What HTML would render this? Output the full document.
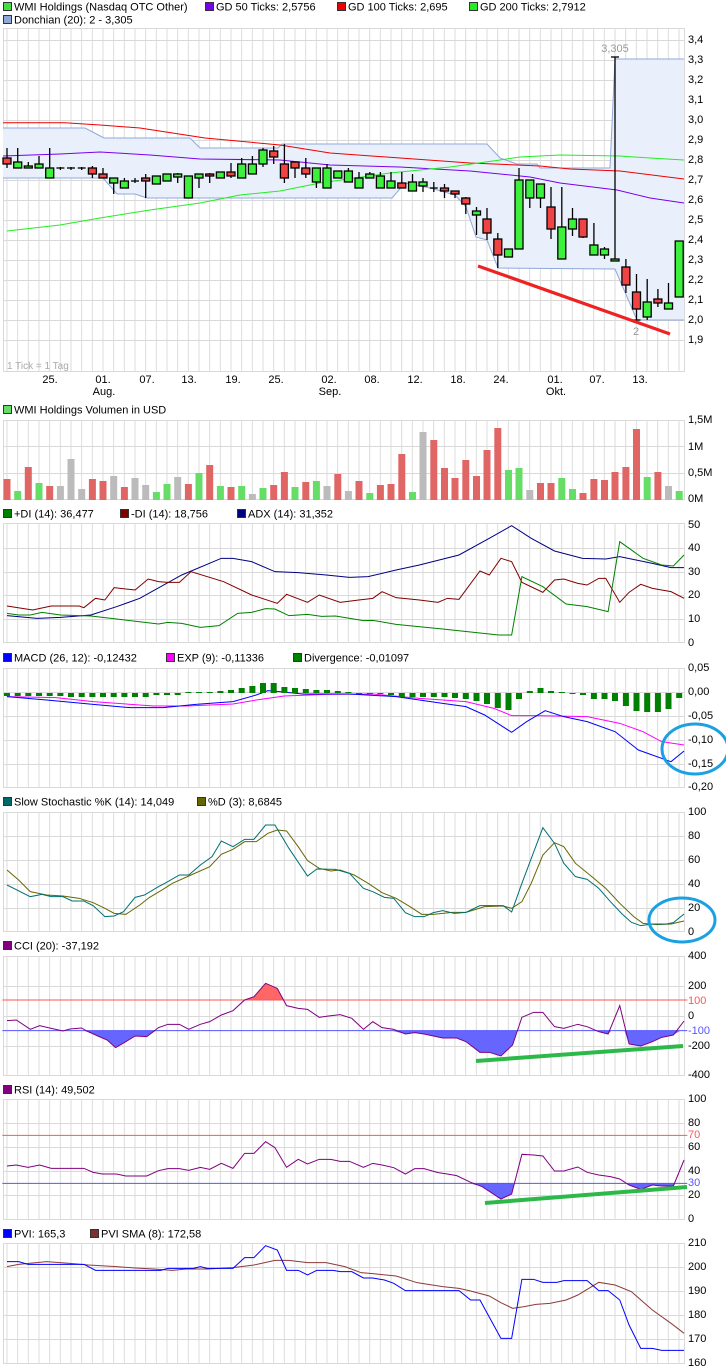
<!DOCTYPE html>
<html><head><meta charset="utf-8"><style>
html,body{margin:0;padding:0;background:#fff;}
svg{display:block;}
text{font-family:"Liberation Sans",sans-serif;font-size:11px;fill:#000;}
.ax{dominant-baseline:central;}
.gl{stroke:#d9d9d9;stroke-width:1;fill:none;}
.ln{fill:none;stroke-width:1;vector-effect:non-scaling-stroke;}
</style></head><body>
<svg width="726" height="1372" viewBox="0 0 726 1372" xmlns="http://www.w3.org/2000/svg">
<defs>
<pattern id="vg" patternUnits="userSpaceOnUse" x="6.5" y="0" width="10.667" height="2000">
<rect x="0" y="0" width="1" height="2000" fill="#dcdcdc"/>
</pattern>
</defs>

<!-- ===== Legends ===== -->
<g>
<rect x="3.5" y="2.5" width="8" height="8" fill="#44dd44" stroke="#333"/><text x="14" y="10.5">WMI Holdings (Nasdaq OTC Other)</text>
<rect x="205.5" y="2.5" width="8" height="8" fill="#7700ee" stroke="#333"/><text x="216" y="10.5">GD 50 Ticks: 2,5756</text>
<rect x="337.5" y="2.5" width="8" height="8" fill="#ee0000" stroke="#333"/><text x="348" y="10.5">GD 100 Ticks: 2,695</text>
<rect x="469.5" y="2.5" width="8" height="8" fill="#22ee22" stroke="#333"/><text x="480" y="10.5">GD 200 Ticks: 2,7912</text>
<rect x="3.5" y="15.5" width="8" height="8" fill="#8fa8d8" stroke="#333"/><text x="14" y="23.5">Donchian (20): 2 - 3,305</text>

<rect x="3.5" y="405.5" width="8" height="8" fill="#66dd66" stroke="#333"/><text x="14" y="413.5">WMI Holdings Volumen in USD</text>

<rect x="3.5" y="509.5" width="8" height="8" fill="#008000" stroke="#333"/><text x="14" y="517.5">+DI (14): 36,477</text>
<rect x="120.5" y="509.5" width="8" height="8" fill="#800000" stroke="#333"/><text x="131" y="517.5">-DI (14): 18,756</text>
<rect x="237.5" y="509.5" width="8" height="8" fill="#000080" stroke="#333"/><text x="248" y="517.5">ADX (14): 31,352</text>

<rect x="3.5" y="653.5" width="8" height="8" fill="#0000ff" stroke="#333"/><text x="14" y="661.5">MACD (26, 12): -0,12432</text>
<rect x="166.5" y="653.5" width="8" height="8" fill="#ff00ff" stroke="#333"/><text x="177" y="661.5">EXP (9): -0,11336</text>
<rect x="293.5" y="653.5" width="8" height="8" fill="#008000" stroke="#333"/><text x="304" y="661.5">Divergence: -0,01097</text>

<rect x="3.5" y="797.5" width="8" height="8" fill="#006666" stroke="#333"/><text x="14" y="805.5">Slow Stochastic %K (14): 14,049</text>
<rect x="197.5" y="797.5" width="8" height="8" fill="#666600" stroke="#333"/><text x="208" y="805.5">%D (3): 8,6845</text>

<rect x="3.5" y="941.5" width="8" height="8" fill="#800080" stroke="#333"/><text x="14" y="949.5">CCI (20): -37,192</text>

<rect x="3.5" y="1085.5" width="8" height="8" fill="#800080" stroke="#333"/><text x="14" y="1093.5">RSI (14): 49,502</text>

<rect x="3.5" y="1229.5" width="8" height="8" fill="#0000ff" stroke="#333"/><text x="14" y="1237.5">PVI: 165,3</text>
<rect x="90.5" y="1229.5" width="8" height="8" fill="#803030" stroke="#333"/><text x="101" y="1237.5">PVI SMA (8): 172,58</text>
</g>

<!-- ===== Vertical grid ===== -->
<rect x="3" y="28" width="681" height="344" fill="url(#vg)"/>
<rect x="3" y="420" width="681" height="80" fill="url(#vg)"/>
<rect x="3" y="523" width="681" height="120" fill="url(#vg)"/>
<rect x="3" y="668" width="681" height="119" fill="url(#vg)"/>
<rect x="3" y="812" width="681" height="120" fill="url(#vg)"/>
<rect x="3" y="956" width="681" height="119" fill="url(#vg)"/>
<rect x="3" y="1099" width="681" height="120" fill="url(#vg)"/>
<rect x="3" y="1243" width="681" height="120" fill="url(#vg)"/>

<!-- ===== Horizontal grid + borders ===== -->
<g class="gl">
<path d="M3 28.5H684 M3 40.5H684 M3 60.5H684 M3 80.5H684 M3 100.5H684 M3 120.5H684 M3 140.5H684 M3 160.5H684 M3 180.5H684 M3 200.5H684 M3 220.5H684 M3 240.5H684 M3 260.5H684 M3 280.5H684 M3 300.5H684 M3 320.5H684 M3 340.5H684 M3 371.5H684 M3.5 28V372 M684.5 28V372"/>
<path d="M3 420.5H684 M3 446.5H684 M3 473.5H684 M3 499.5H684 M3.5 420V500 M684.5 420V500"/>
<path d="M3 523.5H684 M3 548.5H684 M3 572.5H684 M3 595.5H684 M3 619.5H684 M3 642.5H684 M3.5 523V643 M684.5 523V643"/>
<path d="M3 668.5H684 M3 692.5H684 M3 716.5H684 M3 740.5H684 M3 764.5H684 M3 787.5H684 M3.5 668V788 M684.5 668V788"/>
<path d="M3 812.5H684 M3 836.5H684 M3 860.5H684 M3 884.5H684 M3 908.5H684 M3 931.5H684 M3.5 812V932 M684.5 812V932"/>
<path d="M3 956.5H684 M3 986.5H684 M3 1016.5H684 M3 1046.5H684 M3 1075.5H684 M3.5 956V1076 M684.5 956V1076"/>
<path d="M3 1099.5H684 M3 1123.5H684 M3 1147.5H684 M3 1171.5H684 M3 1195.5H684 M3 1219.5H684 M3.5 1099V1220 M684.5 1099V1220"/>
<path d="M3 1243.5H684 M3 1267.5H684 M3 1291.5H684 M3 1315.5H684 M3 1339.5H684 M3 1363.5H684 M3.5 1243V1364 M684.5 1243V1364"/>
</g>

<!-- ===== Axis labels ===== -->
<g class="ax">
<text x="688" y="40" class="ax">3,4</text><text x="688" y="60" class="ax">3,3</text><text x="688" y="80" class="ax">3,2</text><text x="688" y="100" class="ax">3,1</text><text x="688" y="120" class="ax">3,0</text><text x="688" y="140" class="ax">2,9</text><text x="688" y="160" class="ax">2,8</text><text x="688" y="180" class="ax">2,7</text><text x="688" y="200" class="ax">2,6</text><text x="688" y="220" class="ax">2,5</text><text x="688" y="240" class="ax">2,4</text><text x="688" y="260" class="ax">2,3</text><text x="688" y="280" class="ax">2,2</text><text x="688" y="300" class="ax">2,1</text><text x="688" y="320" class="ax">2,0</text><text x="688" y="340" class="ax">1,9</text>
<text x="688" y="420" class="ax">1,5M</text><text x="688" y="447" class="ax">1M</text><text x="688" y="473" class="ax">0,5M</text><text x="688" y="499" class="ax">0M</text>
<text x="688" y="525" class="ax">50</text><text x="688" y="548" class="ax">40</text><text x="688" y="572" class="ax">30</text><text x="688" y="595" class="ax">20</text><text x="688" y="619" class="ax">10</text><text x="688" y="643" class="ax">0</text>
<text x="688" y="668" class="ax">0,05</text><text x="688" y="692" class="ax">0,00</text><text x="688" y="716" class="ax">-0,05</text><text x="688" y="740" class="ax">-0,10</text><text x="688" y="764" class="ax">-0,15</text><text x="688" y="787" class="ax">-0,20</text>
<text x="688" y="812" class="ax">100</text><text x="688" y="836" class="ax">80</text><text x="688" y="860" class="ax">60</text><text x="688" y="884" class="ax">40</text><text x="688" y="908" class="ax">20</text><text x="688" y="932" class="ax">0</text>
<text x="688" y="956" class="ax">400</text><text x="688" y="986" class="ax">200</text><text x="688" y="1001" class="ax" style="fill:#ff5555">100</text><text x="688" y="1016" class="ax">0</text><text x="688" y="1031" class="ax" style="fill:#5555ff">-100</text><text x="688" y="1046" class="ax">-200</text><text x="688" y="1075" class="ax">-400</text>
<text x="688" y="1099" class="ax">100</text><text x="688" y="1123" class="ax">80</text><text x="688" y="1135" class="ax" style="fill:#ff5555">70</text><text x="688" y="1147" class="ax">60</text><text x="688" y="1171" class="ax">40</text><text x="688" y="1183" class="ax" style="fill:#5555ff">30</text><text x="688" y="1195" class="ax">20</text><text x="688" y="1219" class="ax">0</text>
<text x="688" y="1243" class="ax">210</text><text x="688" y="1267" class="ax">200</text><text x="688" y="1291" class="ax">190</text><text x="688" y="1315" class="ax">180</text><text x="688" y="1339" class="ax">170</text><text x="688" y="1363" class="ax">160</text>
</g>
<g text-anchor="middle">
<text x="50" y="383">25.</text><text x="103" y="383">01.</text><text x="147" y="383">07.</text><text x="189" y="383">13.</text><text x="233" y="383">19.</text><text x="276" y="383">25.</text><text x="329" y="383">02.</text><text x="372" y="383">08.</text><text x="415" y="383">12.</text><text x="458" y="383">18.</text><text x="501" y="383">24.</text><text x="555" y="383">01.</text><text x="597" y="383">07.</text><text x="640" y="383">13.</text>
<text x="104" y="395">Aug.</text><text x="330" y="395">Sep.</text><text x="556" y="395">Okt.</text>
</g>
<text x="7" y="369" style="fill:#aaa;font-size:10px">1 Tick = 1 Tag</text>

<!-- ===== Donchian ===== -->
<polygon points="3,128 85,128 104,138 190,138 200,148 278,148 282,144 487,144 500,158 517,164 537,164 540,168 610,168 615,59 684,59 684,320 637,320 615,269 498,268 487,240 476,237 466,207 455,195 430,188 405,183 392,198 147,198 135,194 117,194 103,178 3,178" fill="#eaf0fb" stroke="none"/>
<polyline class="ln" stroke="#8fa8d8" points="3,128 85,128 104,138 190,138 200,148 278,148 282,144 487,144 500,158 517,164 537,164 540,168 610,168 615,59 684,59"/>
<polyline class="ln" stroke="#8fa8d8" points="3,178 103,178 117,194 135,194 147,198 392,198 405,183 430,188 455,195 466,207 476,237 487,240 498,268 615,269 637,320 684,320"/>

<!-- MAs -->
<polyline class="ln" stroke="#ee0000" stroke-width="1.3" points="3,122.7 65,122.7 100,125 140,128 205,138 280,145 330,153 470,163 540,166 570,169 620,171 684,179"/>
<polyline class="ln" stroke="#7700ee" stroke-width="1.3" points="3,156 60,154 100,152 150,155 200,159 280,160 330,165 400,167 470,171 530,177 560,183 617,190 650,198 684,203"/>
<polyline class="ln" stroke="#22ee22" stroke-width="1.3" points="7,231 60,225 100,218 150,210 200,203 240,195 280,191 320,183 390,173 450,167 500,160 520,157 560,155 620,156 650,158 684,160"/>

<!-- Candles -->
<g stroke="#000" stroke-width="1.3">
<line x1="7" y1="148" x2="7" y2="168"/><rect x="3" y="158" width="8" height="6" fill="#f04444"/>
<line x1="17.7" y1="148" x2="17.7" y2="168"/><rect x="13.7" y="162" width="8" height="6" fill="#3cf03c"/>
<line x1="28.3" y1="162" x2="28.3" y2="168"/><rect x="24.3" y="166" width="8" height="2" fill="#3cf03c"/>
<line x1="39" y1="156" x2="39" y2="168"/><rect x="35" y="164" width="8" height="4" fill="#3cf03c"/>
<line x1="49.7" y1="148" x2="49.7" y2="178"/><rect x="45.7" y="168" width="8" height="10" fill="#3cf03c"/>
<line x1="60.4" y1="167" x2="60.4" y2="170"/><line x1="56.4" y1="168" x2="64.4" y2="168"/>
<line x1="71" y1="167" x2="71" y2="170"/><line x1="67" y1="168" x2="75" y2="168"/>
<line x1="81.7" y1="167" x2="81.7" y2="170"/><line x1="77.7" y1="168" x2="85.7" y2="168"/>
<line x1="92.4" y1="166" x2="92.4" y2="178"/><rect x="88.4" y="168" width="8" height="6" fill="#f04444"/>
<line x1="103" y1="168" x2="103" y2="178"/><rect x="99" y="174" width="8" height="4" fill="#f04444"/>
<line x1="113.7" y1="178" x2="113.7" y2="194"/><rect x="109.7" y="178" width="8" height="5" fill="#3cf03c"/>
<line x1="124.4" y1="178" x2="124.4" y2="188"/><rect x="120.4" y="181" width="8" height="7" fill="#3cf03c"/>
<line x1="135" y1="178" x2="135" y2="183"/><line x1="131" y1="181" x2="139" y2="181"/>
<line x1="145.7" y1="174" x2="145.7" y2="198"/><rect x="141.7" y="178" width="8" height="3" fill="#f04444"/>
<rect x="152.4" y="176" width="8" height="8" fill="#3cf03c"/>
<rect x="163" y="174" width="8" height="7" fill="#3cf03c"/>
<line x1="177.7" y1="173" x2="177.7" y2="183"/><rect x="173.7" y="174" width="8" height="3" fill="#3cf03c"/>
<rect x="184.4" y="176" width="8" height="22" fill="#3cf03c"/>
<line x1="199" y1="174" x2="199" y2="188"/><rect x="195" y="174" width="8" height="4" fill="#3cf03c"/>
<line x1="209.7" y1="173" x2="209.7" y2="183"/><rect x="205.7" y="174" width="8" height="2" fill="#f04444"/>
<rect x="216.4" y="172" width="8" height="6" fill="#3cf03c"/>
<line x1="231" y1="163" x2="231" y2="178"/><rect x="227" y="172" width="8" height="4" fill="#f04444"/>
<line x1="241.7" y1="158" x2="241.7" y2="178"/><rect x="237.7" y="164" width="8" height="14" fill="#3cf03c"/>
<line x1="252.4" y1="156" x2="252.4" y2="174"/><rect x="248.4" y="164" width="8" height="10" fill="#3cf03c"/>
<line x1="263" y1="148" x2="263" y2="167"/><rect x="259" y="150" width="8" height="14" fill="#3cf03c"/>
<line x1="273.7" y1="146" x2="273.7" y2="164"/><rect x="269.7" y="151" width="8" height="6" fill="#f04444"/>
<line x1="284.4" y1="144" x2="284.4" y2="183"/><rect x="280.4" y="164" width="8" height="14" fill="#f04444"/>
<line x1="295" y1="162" x2="295" y2="178"/><rect x="291" y="162" width="8" height="6" fill="#f04444"/>
<line x1="305.8" y1="158" x2="305.8" y2="178"/><rect x="301.8" y="168" width="8" height="6" fill="#f04444"/>
<line x1="316.4" y1="168" x2="316.4" y2="188"/><rect x="312.4" y="168" width="8" height="14" fill="#3cf03c"/>
<line x1="327" y1="164" x2="327" y2="188"/><rect x="323" y="168" width="8" height="20" fill="#3cf03c"/>
<rect x="333.8" y="171" width="8" height="7" fill="#3cf03c"/>
<line x1="348.4" y1="168" x2="348.4" y2="182"/><rect x="344.4" y="171" width="8" height="11" fill="#3cf03c"/>
<line x1="359" y1="172" x2="359" y2="188"/><rect x="355" y="178" width="8" height="10" fill="#3cf03c"/>
<line x1="369.8" y1="172" x2="369.8" y2="178"/><rect x="365.8" y="174" width="8" height="4" fill="#3cf03c"/>
<line x1="380.4" y1="172" x2="380.4" y2="188"/><rect x="376.4" y="176" width="8" height="12" fill="#3cf03c"/>
<line x1="391" y1="172" x2="391" y2="188"/><rect x="387" y="181" width="8" height="7" fill="#3cf03c"/>
<line x1="401.8" y1="172" x2="401.8" y2="188"/><rect x="397.8" y="183" width="8" height="5" fill="#f04444"/>
<line x1="412.5" y1="174" x2="412.5" y2="191"/><rect x="408.5" y="182" width="8" height="9" fill="#3cf03c"/>
<line x1="423" y1="178" x2="423" y2="192"/><rect x="419" y="182" width="8" height="4" fill="#3cf03c"/>
<line x1="433.8" y1="182" x2="433.8" y2="192"/><line x1="429.8" y1="188" x2="437.8" y2="188"/>
<line x1="444.5" y1="184" x2="444.5" y2="198"/><rect x="440.5" y="188" width="8" height="3" fill="#f04444"/>
<line x1="455" y1="191" x2="455" y2="198"/><rect x="451" y="191" width="8" height="3" fill="#f04444"/>
<line x1="465.8" y1="197" x2="465.8" y2="214"/><rect x="461.8" y="198" width="8" height="6" fill="#f04444"/>
<line x1="476.5" y1="207" x2="476.5" y2="235"/><rect x="472.5" y="211" width="8" height="4" fill="#3cf03c"/>
<line x1="487" y1="208" x2="487" y2="240"/><rect x="483" y="219" width="8" height="14" fill="#f04444"/>
<line x1="497.8" y1="233" x2="497.8" y2="268"/><rect x="493.8" y="239" width="8" height="16" fill="#f04444"/>
<rect x="504.5" y="249" width="8" height="8" fill="#3cf03c"/>
<line x1="519" y1="168" x2="519" y2="249"/><rect x="515" y="180" width="8" height="69" fill="#3cf03c"/>
<line x1="529.8" y1="180" x2="529.8" y2="208"/><rect x="525.8" y="180" width="8" height="18" fill="#3cf03c"/>
<line x1="540.5" y1="184" x2="540.5" y2="208"/><rect x="536.5" y="184" width="8" height="14" fill="#3cf03c"/>
<line x1="551" y1="187" x2="551" y2="239"/><rect x="547" y="207" width="8" height="22" fill="#f04444"/>
<line x1="561.8" y1="187" x2="561.8" y2="259"/><rect x="557.8" y="227" width="8" height="32" fill="#3cf03c"/>
<line x1="572.5" y1="208" x2="572.5" y2="236"/><rect x="568.5" y="219" width="8" height="10" fill="#3cf03c"/>
<line x1="583" y1="219" x2="583" y2="238"/><rect x="579" y="219" width="8" height="18" fill="#f04444"/>
<line x1="593.9" y1="223" x2="593.9" y2="255"/><rect x="589.9" y="245" width="8" height="10" fill="#3cf03c"/>
<line x1="604.5" y1="247" x2="604.5" y2="259"/><rect x="600.5" y="249" width="8" height="6" fill="#3cf03c"/>
<line x1="615" y1="57" x2="615" y2="261"/><rect x="611" y="259" width="8" height="2" fill="#3cf03c"/><line x1="611" y1="57" x2="619" y2="57"/>
<line x1="625.9" y1="259" x2="625.9" y2="293"/><rect x="621.9" y="267" width="8" height="18" fill="#f04444"/>
<line x1="636.5" y1="274" x2="636.5" y2="320"/><rect x="632.5" y="292" width="8" height="17" fill="#f04444"/><line x1="632.5" y1="320" x2="640.5" y2="320"/>
<line x1="647.2" y1="279" x2="647.2" y2="320"/><rect x="643.2" y="302" width="8" height="15" fill="#3cf03c"/>
<line x1="657.9" y1="289" x2="657.9" y2="307"/><rect x="653.9" y="299" width="8" height="4" fill="#f04444"/>
<line x1="668.5" y1="283" x2="668.5" y2="309"/><rect x="664.5" y="303" width="8" height="6" fill="#3cf03c"/>
<rect x="675.2" y="241" width="8" height="56" fill="#3cf03c"/>
</g>
<line x1="478" y1="266" x2="670" y2="334" stroke="#ee2222" stroke-width="3.2"/>
<text x="615" y="52" text-anchor="middle" style="fill:#999">3,305</text>
<text x="636" y="335" text-anchor="middle" style="fill:#999">2</text>

<!-- ===== Volume ===== -->
<g>
<rect x="3.5" y="479" width="7" height="21" fill="#e06666"/><rect x="14.2" y="491" width="7" height="9" fill="#66dd66"/><rect x="24.8" y="467" width="7" height="33" fill="#e06666"/><rect x="35.5" y="483" width="7" height="17" fill="#66dd66"/><rect x="46.2" y="486" width="7" height="14" fill="#e06666"/><rect x="56.9" y="486" width="7" height="14" fill="#bbb"/><rect x="67.5" y="459" width="7" height="41" fill="#bbb"/><rect x="78.2" y="489" width="7" height="11" fill="#bbb"/><rect x="88.9" y="479" width="7" height="21" fill="#e06666"/><rect x="99.5" y="481" width="7" height="19" fill="#e06666"/><rect x="110.2" y="476" width="7" height="24" fill="#bbb"/><rect x="120.9" y="487" width="7" height="13" fill="#e06666"/><rect x="131.5" y="478" width="7" height="22" fill="#bbb"/><rect x="142.2" y="485" width="7" height="15" fill="#bbb"/><rect x="152.9" y="492" width="7" height="8" fill="#66dd66"/><rect x="163.5" y="484" width="7" height="16" fill="#66dd66"/>
<rect x="174.2" y="477" width="7" height="23" fill="#bbb"/><rect x="184.9" y="484" width="7" height="16" fill="#e06666"/><rect x="195.5" y="473" width="7" height="27" fill="#66dd66"/><rect x="206.2" y="465" width="7" height="35" fill="#e06666"/><rect x="216.9" y="486" width="7" height="14" fill="#66dd66"/><rect x="227.5" y="487" width="7" height="13" fill="#e06666"/><rect x="238.2" y="486" width="7" height="14" fill="#66dd66"/><rect x="248.9" y="494" width="7" height="6" fill="#bbb"/><rect x="259.5" y="488" width="7" height="12" fill="#66dd66"/><rect x="270.2" y="485" width="7" height="15" fill="#e06666"/><rect x="280.9" y="472" width="7" height="28" fill="#e06666"/><rect x="291.5" y="487" width="7" height="13" fill="#66dd66"/><rect x="302.3" y="482" width="7" height="18" fill="#e06666"/><rect x="312.9" y="481" width="7" height="19" fill="#66dd66"/><rect x="323.5" y="486" width="7" height="14" fill="#bbb"/><rect x="334.3" y="474" width="7" height="26" fill="#e06666"/>
<rect x="344.9" y="491" width="7" height="9" fill="#bbb"/><rect x="355.5" y="481" width="7" height="19" fill="#e06666"/><rect x="366.3" y="493" width="7" height="7" fill="#66dd66"/><rect x="376.9" y="485" width="7" height="15" fill="#e06666"/><rect x="387.5" y="484" width="7" height="16" fill="#e06666"/><rect x="398.3" y="454" width="7" height="46" fill="#e06666"/><rect x="409" y="492" width="7" height="8" fill="#66dd66"/><rect x="419.5" y="432" width="7" height="68" fill="#bbb"/><rect x="430.3" y="440" width="7" height="60" fill="#e06666"/><rect x="441" y="468" width="7" height="32" fill="#e06666"/><rect x="451.5" y="478" width="7" height="22" fill="#e06666"/><rect x="462.3" y="460" width="7" height="40" fill="#e06666"/><rect x="473" y="476" width="7" height="24" fill="#e06666"/><rect x="483.5" y="450" width="7" height="50" fill="#e06666"/><rect x="494.3" y="428" width="7" height="72" fill="#e06666"/><rect x="505" y="470" width="7" height="30" fill="#66dd66"/>
<rect x="515.5" y="468" width="7" height="32" fill="#66dd66"/><rect x="526.3" y="490" width="7" height="10" fill="#bbb"/><rect x="537" y="483" width="7" height="17" fill="#e06666"/><rect x="547.5" y="483" width="7" height="17" fill="#e06666"/><rect x="558.3" y="478" width="7" height="22" fill="#66dd66"/><rect x="569" y="489" width="7" height="11" fill="#66dd66"/><rect x="579.5" y="493" width="7" height="7" fill="#e06666"/><rect x="590.4" y="479" width="7" height="21" fill="#e06666"/><rect x="601" y="480" width="7" height="20" fill="#e06666"/><rect x="611.5" y="472" width="7" height="28" fill="#e06666"/><rect x="622.4" y="467" width="7" height="33" fill="#e06666"/><rect x="633" y="429" width="7" height="71" fill="#e06666"/><rect x="643.7" y="477" width="7" height="23" fill="#66dd66"/><rect x="654.4" y="472" width="7" height="28" fill="#e06666"/><rect x="665" y="486" width="7" height="14" fill="#bbb"/><rect x="675.7" y="491" width="7" height="9" fill="#66dd66"/>
</g>

<!-- ===== DI + MACD (zoom6 coords) ===== -->
<g transform="translate(0,505) scale(0.46598,0.33333)">
<polyline class="ln" stroke="#000080" points="15,332 80,340 130,337 195,330 250,305 300,280 390,210 475,160 500,160 540,170 590,200 640,203 700,210 750,217 790,215 850,195 900,180 985,150 1050,100 1098,62 1140,100 1190,138 1250,160 1300,162 1330,155 1400,175 1440,188 1468,188"/>
<polyline class="ln" stroke="#800000" points="15,303 70,315 110,303 170,303 180,308 205,280 225,285 245,248 290,255 318,222 340,230 360,232 385,232 410,200 480,230 540,270 595,295 615,268 660,292 685,270 730,292 770,285 800,280 820,260 850,278 900,285 940,292 960,280 985,283 1030,198 1050,210 1075,160 1098,170 1120,232 1165,262 1190,225 1210,222 1240,235 1260,240 1285,220 1300,220 1330,292 1350,262 1375,238 1400,250 1440,260 1468,280"/>
<polyline class="ln" stroke="#008000" points="15,325 40,330 65,330 90,322 130,330 195,333 250,342 340,357 360,352 390,355 430,367 470,362 510,325 540,322 570,311 590,312 620,332 660,328 690,334 720,333 780,347 800,346 850,358 950,372 1070,390 1098,390 1120,215 1165,245 1215,297 1260,305 1305,320 1330,110 1380,160 1420,180 1445,183 1468,150"/>
<polyline class="ln" stroke="#ff00ff" points="15,575 120,578 200,590 330,603 400,603 500,597 550,585 610,573 700,568 800,567 900,580 1000,590 1060,610 1098,632 1150,632 1260,635 1330,655 1380,680 1420,710 1468,720"/>
<polyline class="ln" stroke="#0000ff" points="15,575 100,585 200,598 280,608 350,608 420,598 500,590 550,570 575,557 600,560 650,567 750,567 850,575 950,595 1000,605 1040,630 1098,682 1130,650 1170,617 1210,635 1260,650 1320,680 1370,735 1440,770 1468,738"/>
</g>
<!-- divergence bars -->
<g fill="#008000">
<rect x="4" y="693" width="6" height="3"/><rect x="14.7" y="693" width="6" height="3"/><rect x="25.3" y="693" width="6" height="3"/><rect x="36" y="693" width="6" height="3"/><rect x="46.7" y="693" width="6" height="3"/><rect x="57.4" y="693" width="6" height="3"/><rect x="68" y="693" width="6" height="4"/><rect x="78.7" y="693" width="6" height="4"/><rect x="89.4" y="693" width="6" height="4"/><rect x="100" y="693" width="6" height="4"/><rect x="110.7" y="693" width="6" height="4"/><rect x="121.4" y="693" width="6" height="4"/><rect x="132" y="693" width="6" height="4"/><rect x="142.7" y="693" width="6" height="4"/><rect x="153.4" y="693" width="6" height="2"/><rect x="164" y="693" width="6" height="2"/><rect x="174.7" y="693" width="6" height="2"/>
<rect x="185.4" y="692" width="6" height="1"/><rect x="196" y="692" width="6" height="1"/><rect x="206.7" y="692" width="6" height="1"/><rect x="217.4" y="691" width="6" height="2"/><rect x="228" y="690" width="6" height="3"/><rect x="238.7" y="688" width="6" height="5"/><rect x="249.4" y="686" width="6" height="7"/><rect x="260" y="683" width="6" height="10"/><rect x="270.7" y="683" width="6" height="10"/><rect x="281.4" y="687" width="6" height="6"/><rect x="292" y="688" width="6" height="5"/><rect x="302.8" y="689" width="6" height="4"/><rect x="313.4" y="690" width="6" height="3"/><rect x="324" y="690" width="6" height="3"/><rect x="334.8" y="691" width="6" height="2"/><rect x="345.4" y="692" width="6" height="1"/>
<rect x="356" y="693" width="6" height="1"/><rect x="366.8" y="693" width="6" height="1"/><rect x="377.4" y="693" width="6" height="1"/><rect x="388" y="693" width="6" height="2"/><rect x="398.8" y="693" width="6" height="4"/><rect x="409.5" y="693" width="6" height="4"/><rect x="420" y="693" width="6" height="4"/><rect x="430.8" y="693" width="6" height="4"/><rect x="441.5" y="693" width="6" height="4"/><rect x="452" y="693" width="6" height="5"/><rect x="462.8" y="693" width="6" height="6"/><rect x="473.5" y="693" width="6" height="8"/><rect x="484" y="693" width="6" height="11"/><rect x="494.8" y="693" width="6" height="15"/><rect x="505.5" y="693" width="6" height="17"/><rect x="516" y="693" width="6" height="6"/>
<rect x="526.8" y="691" width="6" height="2"/><rect x="537.5" y="688" width="6" height="5"/><rect x="548" y="691" width="6" height="2"/><rect x="558.8" y="692" width="6" height="1"/><rect x="569.5" y="693" width="6" height="1"/><rect x="580" y="693" width="6" height="2"/><rect x="590.9" y="693" width="6" height="6"/><rect x="601.5" y="693" width="6" height="6"/><rect x="612" y="693" width="6" height="8"/><rect x="622.9" y="693" width="6" height="13"/><rect x="633.5" y="693" width="6" height="18"/><rect x="644.2" y="693" width="6" height="19"/><rect x="654.9" y="693" width="6" height="19"/><rect x="665.5" y="693" width="6" height="16"/><rect x="676.2" y="693" width="6" height="5"/>
</g>
<ellipse cx="695" cy="749" rx="33" ry="25" fill="none" stroke="#1ba1e2" stroke-width="3"/>

<!-- ===== Stoch + CCI (zoom7 coords) ===== -->
<g transform="translate(0,760) scale(0.46598,0.33333)">
<polyline class="ln" stroke="#666600" points="15,330 40,360 65,395 100,405 135,408 170,415 200,428 225,445 245,460 270,463 300,435 320,413 350,388 370,370 410,345 450,320 475,283 500,268 525,245 550,245 575,220 595,210 615,213 640,260 660,302 685,325 710,333 730,330 760,345 790,370 820,398 850,415 880,440 905,463 930,463 970,457 1000,457 1040,440 1080,438 1098,445 1120,425 1140,370 1165,285 1190,248 1210,260 1235,310 1270,350 1300,385 1330,430 1360,470 1380,490 1410,494 1440,492 1468,483"/>
<polyline class="ln" stroke="#007070" points="15,375 65,410 90,403 110,410 135,410 155,423 180,423 200,437 225,470 245,468 265,455 290,412 310,405 340,380 360,365 385,345 405,345 430,315 455,290 475,243 500,260 525,238 545,238 570,195 590,195 620,265 660,348 680,327 720,328 750,340 780,385 800,395 825,412 845,415 870,458 890,470 910,470 930,458 950,452 975,460 1000,457 1030,437 1060,437 1080,437 1098,456 1120,370 1165,203 1190,250 1210,310 1235,350 1260,358 1285,385 1310,425 1335,462 1355,487 1375,497 1400,492 1430,492 1445,488 1468,462"/>
<polygon fill="#ff6666" points="525,720 545,710 570,670 595,685 608,720"/>
<polygon fill="#6666ff" points="180,812 210,828 230,840 248,863 270,845 290,828 315,830 335,812"/>
<polygon fill="#6666ff" points="840,812 870,822 890,818 910,822 950,834 980,834 1000,845 1030,877 1050,877 1075,888 1100,855 1110,812"/>
<polygon fill="#6666ff" points="1280,812 1285,815 1305,822 1312,812"/>
<polygon fill="#6666ff" points="1340,812 1350,852 1375,858 1400,845 1420,832 1445,825 1460,812"/>
<line class="ln" x1="5" y1="720" x2="1475" y2="720" stroke="#ff5555"/>
<line class="ln" x1="5" y1="812" x2="1475" y2="812" stroke="#5555ff"/>
<polyline class="ln" stroke="#800080" points="15,782 35,780 65,808 85,797 110,805 135,813 150,807 175,804 185,812 210,828 230,840 248,863 270,845 290,828 315,830 340,803 360,793 385,793 405,808 430,793 450,785 475,765 500,752 525,720 545,710 570,670 595,685 615,737 640,745 660,748 685,772 705,768 730,764 755,775 780,808 800,785 820,803 845,808 870,822 890,818 910,822 950,834 980,834 1000,845 1030,877 1050,877 1075,888 1100,855 1120,772 1145,757 1165,757 1190,800 1210,805 1240,793 1260,800 1285,815 1305,822 1330,737 1350,852 1375,858 1400,845 1420,832 1445,825 1468,783"/>
</g>
<ellipse cx="682" cy="920" rx="33" ry="22" fill="none" stroke="#1ba1e2" stroke-width="3"/>
<line x1="476" y1="1061" x2="683" y2="1046" stroke="#2db84a" stroke-width="4"/>

<!-- ===== RSI + PVI (zoom8 coords) ===== -->
<g transform="translate(0,1075) scale(0.46598,0.33333)">
<polygon fill="#6666ff" points="1008,325 1035,335 1075,372 1098,357 1103,325"/>
<polygon fill="#6666ff" points="1345,325 1350,330 1375,343 1400,330 1420,333 1445,333 1450,325"/>
<line class="ln" x1="5" y1="181" x2="1475" y2="181" stroke="#ff5555"/>
<line class="ln" x1="5" y1="325" x2="1475" y2="325" stroke="#5555ff"/>
<polyline class="ln" stroke="#800080" points="15,273 35,270 60,277 85,270 110,280 180,280 200,292 220,297 250,297 270,303 315,303 340,287 360,281 385,281 405,286 430,277 450,283 475,265 500,280 525,235 545,235 570,200 590,218 615,277 640,253 660,267 685,253 710,253 730,259 750,259 780,277 800,265 820,270 845,278 870,297 890,281 910,281 940,293 960,297 980,302 1010,322 1035,335 1075,372 1098,357 1120,238 1145,240 1165,243 1190,288 1210,288 1240,276 1260,292 1285,300 1310,305 1330,312 1350,330 1375,343 1400,330 1420,333 1445,333 1468,255"/>
<polyline class="ln" stroke="#8b3a3a" points="15,575 40,568 100,560 150,565 190,570 250,575 290,579 330,582 370,586 400,582 445,582 500,578 545,570 590,556 620,556 660,563 700,563 740,575 775,593 800,596 850,603 895,623 950,635 985,640 1010,648 1050,663 1075,683 1100,700 1125,695 1150,688 1180,685 1215,675 1240,660 1285,622 1320,630 1355,650 1400,705 1440,745 1468,775"/>
<polyline class="ln" stroke="#0000ff" points="15,560 40,560 60,568 180,568 205,586 345,586 360,580 415,580 430,575 445,580 500,580 525,548 545,548 570,512 595,525 615,586 640,586 660,600 680,586 715,586 730,590 755,590 780,609 800,609 825,615 845,625 870,647 985,647 1010,675 1030,675 1075,790 1098,790 1120,613 1145,613 1165,622 1195,622 1210,617 1260,617 1285,647 1305,647 1330,675 1350,750 1375,820 1400,820 1420,826 1468,826"/>
</g>
<line x1="485" y1="1203" x2="687" y2="1187" stroke="#2db84a" stroke-width="4"/>
</svg>
</body></html>
